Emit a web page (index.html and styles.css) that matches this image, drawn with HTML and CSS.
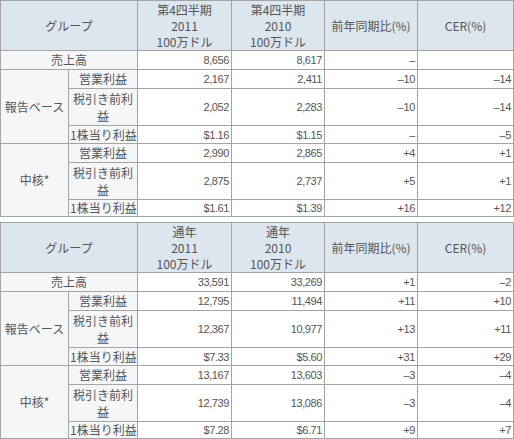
FILE: index.html
```html
<!DOCTYPE html>
<html lang="ja">
<head>
	<meta charset="UTF-8">
	<title>業績</title>
	<link rel="stylesheet" href="styles.css">
</head>
<body>
<table class="result">
	<colgroup>
		<col class="c1"><col class="c2"><col class="c3"><col class="c4"><col class="c5"><col class="c6">
	</colgroup>
	<tr class="head">
		<th colspan="2">グループ</th>
		<th>第4四半期<br>2011<br>100万ドル</th>
		<th>第4四半期<br>2010<br>100万ドル</th>
		<th>前年同期比(%)</th>
		<th>CER(%)</th>
	</tr>
	<tr class="one">
		<td class="label" colspan="2">売上高</td>
		<td class="num">8,656</td>
		<td class="num">8,617</td>
		<td class="num">–</td>
		<td class="num"></td>
	</tr>
	<tr class="one">
		<td class="label" rowspan="3">報告ベース</td>
		<td class="label">営業利益</td>
		<td class="num">2,167</td>
		<td class="num">2,411</td>
		<td class="num">–10</td>
		<td class="num">–14</td>
	</tr>
	<tr class="two">
		<td class="label">税引き前利<br>益</td>
		<td class="num">2,052</td>
		<td class="num">2,283</td>
		<td class="num">–10</td>
		<td class="num">–14</td>
	</tr>
	<tr class="eps">
		<td class="label">1株当り利益</td>
		<td class="num">$1.16</td>
		<td class="num">$1.15</td>
		<td class="num">–</td>
		<td class="num">–5</td>
	</tr>
	<tr class="one">
		<td class="label" rowspan="3">中核*</td>
		<td class="label">営業利益</td>
		<td class="num">2,990</td>
		<td class="num">2,865</td>
		<td class="num">+4</td>
		<td class="num">+1</td>
	</tr>
	<tr class="two">
		<td class="label">税引き前利<br>益</td>
		<td class="num">2,875</td>
		<td class="num">2,737</td>
		<td class="num">+5</td>
		<td class="num">+1</td>
	</tr>
	<tr class="last">
		<td class="label">1株当り利益</td>
		<td class="num">$1.61</td>
		<td class="num">$1.39</td>
		<td class="num">+16</td>
		<td class="num">+12</td>
	</tr>
</table>

<table class="result">
	<colgroup>
		<col class="c1"><col class="c2"><col class="c3"><col class="c4"><col class="c5"><col class="c6">
	</colgroup>
	<tr class="head">
		<th colspan="2">グループ</th>
		<th>通年<br>2011<br>100万ドル</th>
		<th>通年<br>2010<br>100万ドル</th>
		<th>前年同期比(%)</th>
		<th>CER(%)</th>
	</tr>
	<tr class="one">
		<td class="label" colspan="2">売上高</td>
		<td class="num">33,591</td>
		<td class="num">33,269</td>
		<td class="num">+1</td>
		<td class="num">–2</td>
	</tr>
	<tr class="one">
		<td class="label" rowspan="3">報告ベース</td>
		<td class="label">営業利益</td>
		<td class="num">12,795</td>
		<td class="num">11,494</td>
		<td class="num">+11</td>
		<td class="num">+10</td>
	</tr>
	<tr class="two">
		<td class="label">税引き前利<br>益</td>
		<td class="num">12,367</td>
		<td class="num">10,977</td>
		<td class="num">+13</td>
		<td class="num">+11</td>
	</tr>
	<tr class="eps">
		<td class="label">1株当り利益</td>
		<td class="num">$7.33</td>
		<td class="num">$5.60</td>
		<td class="num">+31</td>
		<td class="num">+29</td>
	</tr>
	<tr class="one">
		<td class="label" rowspan="3">中核*</td>
		<td class="label">営業利益</td>
		<td class="num">13,167</td>
		<td class="num">13,603</td>
		<td class="num">–3</td>
		<td class="num">–4</td>
	</tr>
	<tr class="two">
		<td class="label">税引き前利<br>益</td>
		<td class="num">12,739</td>
		<td class="num">13,086</td>
		<td class="num">–3</td>
		<td class="num">–4</td>
	</tr>
	<tr class="last">
		<td class="label">1株当り利益</td>
		<td class="num">$7.28</td>
		<td class="num">$6.71</td>
		<td class="num">+9</td>
		<td class="num">+7</td>
	</tr>
</table>
</body>
</html>
```

FILE: styles.css
```css
body{
	margin: 0;
	background: #fff;
	font-family: "Noto Sans CJK JP", sans-serif;
	font-size: 12px;
	color: #555;
}
.result{
	width: 514px;
	border-collapse: collapse;
	table-layout: fixed;
	margin: 0 0 5px 0;
}
.c1{ width: 68px; }
.c2{ width: 69px; }
.c3{ width: 94px; }
.c4{ width: 93px; }
.c5{ width: 93px; }
.c6{ width: 96px; }
.result th,
.result td{
	box-sizing: border-box;
	border: 1px solid #a4a4a4;
	padding: 0 2px;
	line-height: 16px;
	font-weight: normal;
	white-space: nowrap;
	overflow: hidden;
}
.result th{
	background: #dce6ee;
	text-align: center;
}
.result td.label{
	background: #f4f6f8;
	text-align: center;
	padding: 0 1px;
}
.result td.num{
	text-align: right;
	font-family: "Liberation Sans", "Noto Sans CJK JP", sans-serif;
	font-size: 11px;
	letter-spacing: -0.4px;
	padding-right: 2px;
}
.result tr.head th{ height: 50px; }
.result tr.one td{ height: 19px; }
.result tr.two td{ height: 37px; line-height: 17px; }
.result tr.eps td{ height: 18px; }
.result tr.last td{ height: 15px; }
```
